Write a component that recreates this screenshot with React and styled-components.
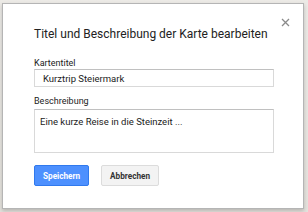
import React from "react";
import styled, { createGlobalStyle } from "styled-components";

const GlobalStyle = createGlobalStyle`
  html, body {
    margin: 0;
    padding: 0;
    background: #e9e7e2;
  }
  body {
    width: 308px;
    height: 212px;
    overflow: hidden;
    font-family: Roboto, "Liberation Sans", Arial, sans-serif;
  }
`;

const Backdrop = styled.div`
  width: 308px;
  height: 212px;
  box-sizing: border-box;
  padding: 3px 3px 3px 2px;
  background: linear-gradient(180deg, #eceae6 0%, #e4e2dd 100%);
`;

const Dialog = styled.div`
  position: relative;
  box-sizing: border-box;
  width: 302px;
  height: 206px;
  background: #fff;
  border: 1px solid #b5b5b5;
  box-shadow: 0 2px 4px rgba(0, 0, 0, 0.2);
  padding: 22px 30px 0 31px;
`;

const Close = styled.button`
  position: absolute;
  top: 11px;
  right: 11px;
  width: 14px;
  height: 14px;
  padding: 0;
  border: 0;
  background: none;
  display: flex;
  align-items: center;
  justify-content: center;
`;

const Title = styled.h1`
  margin: 0 0 16px;
  font-size: 12px;
  line-height: 16px;
  font-weight: 400;
  color: #222;
`;

const Label = styled.label`
  display: block;
  font-size: 9px;
  line-height: 11px;
  color: #222;
  margin-bottom: ${(p) => p.$gap ?? 0}px;
`;

const Field = styled.div`
  margin-bottom: ${(p) => p.$gap || 0}px;
`;

const TextInput = styled.input`
  display: block;
  box-sizing: border-box;
  width: 240px;
  height: 18px;
  margin: 0;
  padding: 0 8px;
  border: 1px solid #d9d9d9;
  border-top-color: #c0c0c0;
  font-family: inherit;
  font-size: 9.5px;
  color: #222;
  outline: none;
`;

const TextArea = styled.textarea`
  display: block;
  box-sizing: border-box;
  width: 240px;
  height: 44px;
  margin: 0;
  padding: 6px 5px;
  border: 1px solid #d9d9d9;
  border-top-color: #c0c0c0;
  font-family: inherit;
  font-size: 9.5px;
  line-height: 12px;
  color: #222;
  resize: none;
  outline: none;
`;

const Buttons = styled.div`
  display: flex;
  gap: 12px;
  margin-top: 12px;
`;

const Button = styled.button`
  box-sizing: border-box;
  height: 21px;
  min-width: 54px;
  padding: 0 8px;
  font-family: inherit;
  font-size: 8.2px;
  font-weight: 700;
  border-radius: 2px;
  border: 1px solid ${(p) => (p.$primary ? "#3079ed" : "#dcdcdc")};
  background: ${(p) => (p.$primary ? "#4d90fe" : "#f3f3f3")};
  color: ${(p) => (p.$primary ? "#fff" : "#333")};
`;

export default function App() {
  return (
    <>
      <GlobalStyle />
      <Backdrop>
        <Dialog>
          <Close aria-label="Schließen">
            <svg width="9" height="9" viewBox="0 0 9 9">
              <path d="M1 1L8 8M8 1L1 8" stroke="#8a8a8a" strokeWidth="1.3" />
            </svg>
          </Close>
          <Title>Titel und Beschreibung der Karte bearbeiten</Title>
          <Field $gap={9}>
            <Label>Kartentitel</Label>
            <TextInput defaultValue="Kurztrip Steiermark" />
          </Field>
          <Field>
            <Label $gap={2}>Beschreibung</Label>
            <TextArea defaultValue="Eine kurze Reise in die Steinzeit ..." />
          </Field>
          <Buttons>
            <Button $primary>Speichern</Button>
            <Button>Abbrechen</Button>
          </Buttons>
        </Dialog>
      </Backdrop>
    </>
  );
}
